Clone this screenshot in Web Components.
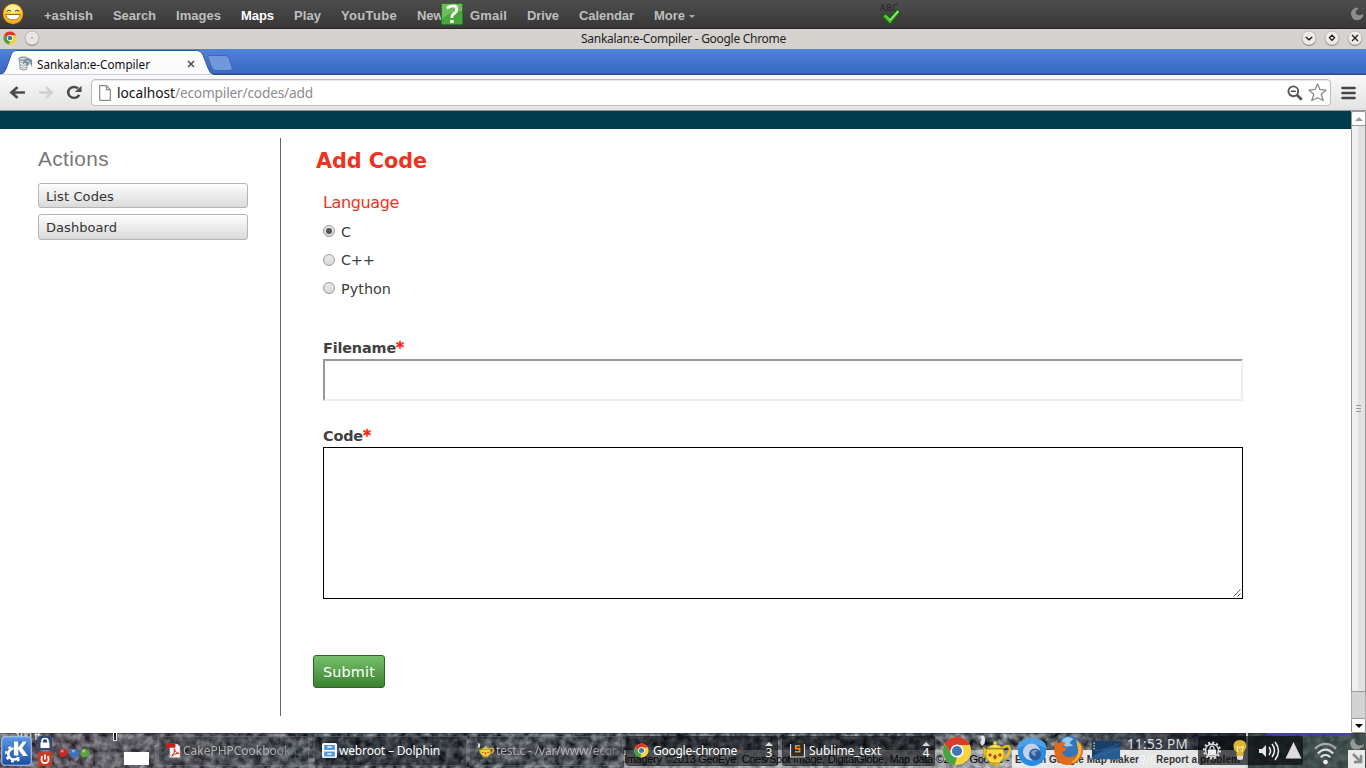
<!DOCTYPE html>
<html lang="en">
<head>
<meta charset="utf-8">
<title>Sankalan:e-Compiler</title>
<style>
html,body{margin:0;padding:0;width:1366px;height:768px;overflow:hidden;background:#fff}
body{font-family:"Liberation Sans",sans-serif}
</style>
</head>
<body>
<desk-screen></desk-screen>
<script>
const define=(name,html,setup)=>{
  const tpl=document.createElement('template');tpl.innerHTML=html;
  customElements.define(name,class extends HTMLElement{
    connectedCallback(){
      if(this.shadowRoot)return;
      this.attachShadow({mode:'open'}).append(tpl.content.cloneNode(true));
      if(setup)setup(this,this.shadowRoot);
    }
  });
};

/* Inline text whose letter spacing is tuned so the run has the width given in "w". */
define('fit-text',`<style>:host{display:inline-block;white-space:pre;flex:none}span{display:inline-block}</style><span><slot></slot></span>`,(el,root)=>{
  const w=+el.getAttribute('w');if(!w)return;
  const s=root.querySelector('span'),n=el.textContent.length;
  s.style.letterSpacing=((w-s.getBoundingClientRect().width)/n)+'px';
});

const chromeBall=`<circle cx="16" cy="16" r="15" fill="#f8d33c"/><path d="M3 8.500L10.200 19.500L16 22.500L13.500 30.800A15 15 0 0 1 3 8.500Z" fill="#45a343"/><path d="M3 8.500A15 15 0 0 1 29.500 9.500H16Q11 10 10 14L9 17Z" fill="#dd3a2e"/><circle cx="16" cy="16" r="7" fill="#fff"/><circle cx="16" cy="16" r="5.400" fill="#3f76b5"/>`;
const teapot=`<path d="M23 13q8-5 8 2q-1 7-9 9" fill="none" stroke="#e8bd22" stroke-width="2.500"/><path d="M10 16L4 12L5 20Q7 25 10 25Z" fill="#eac72b" stroke="#b08b10" stroke-width=".7"/><path d="M8 14h16q4 9-4 14h-8q-8-5-4-14Z" fill="#f5dc3f" stroke="#b9951a"/><path d="M8 13q8-7 16 0z" fill="#f9e765" stroke="#b9951a" stroke-width=".8"/><circle cx="16" cy="8" r="1.800" fill="#f5dc3f"/><path d="M9 20l2-2 2 2-2 2zM19 20l2-2 2 2-2 2zM14 22l2-3 2 3-2 3z" fill="#d8352a"/><path d="M11 28.500h10v2H11z" fill="#dbaf1c"/><path d="M3 11Q0 8 2 6T1 1Q6-1 6 4T5 9Z" fill="#f4f4f4" opacity=".9"/>`;
const icons={
smile:['0 0 22 22',`<circle cx="11" cy="11" r="10.200" fill="#fb9d08"/><circle cx="11" cy="10" r="9" fill="#fecb3a"/><ellipse cx="11" cy="6" rx="7" ry="4" fill="#fff0a0"/><path d="M5 8.500q2-2.500 4 0M13 8.500q2-2.500 4 0" stroke="#70450d" fill="none" stroke-width="1.200"/><path d="M3.700 11.500h14.600q-1 5.500-7.300 5.500t-7.300-5.500z" fill="#fff" stroke="#a06b18"/>`],
question:['0 0 22 22',`<rect x=".5" y=".5" width="21" height="21" rx="1" fill="#46a83a" stroke="#257d1a"/><path d="M1 1h20v7Q10 8 1 16Z" fill="#88cd76" opacity=".6"/><path d="M5.800 5Q15.500 0 15.800 6.500Q15.800 9 12.500 11Q10.800 12.200 10.800 15" stroke="#fff" stroke-width="2.800" fill="none"/><path d="M9.200 17h3.400v3H9.200z" fill="#fff"/>`],
check:['0 0 20 20',`<text x="0" y="9" font-family="Open Sans,sans-serif" font-size="8" textLength="17" fill="#222">ABC</text><path d="M2.500 13.500l3-2.500 4 4 7-8 2.500 2.500L9.500 21Z" fill="#4cc522" stroke="#17600d"/><path d="M4 13l5.500 3.500 7.500-8.500 1 1-8 8.500Z" fill="#a7dfa0"/>`],
cashew:['0 0 16 16',`<path d="M6 1Q-1 4 2 11Q5 17 12 14Q16 11 15 8Q10 11 7 8Q5 4 10 2Q8 0 6 1Z" fill="#8d8d8d"/><path d="M11 1h1M14 2h1" stroke="#777" fill="none"/>`],
chrome:['0 0 32 32',chromeBall],
pin:['0 0 16 16',`<circle cx="8" cy="9" r="7" fill="#918c88"/><circle cx="8" cy="8" r="7" fill="#e9e7e5" stroke="#a8a3a0" stroke-width=".7"/><circle cx="8" cy="8" r=".8" fill="#777"/>`],
min:['0 0 16 16',`<circle cx="8" cy="8.800" r="7.200" fill="#918c88"/><circle cx="8" cy="8" r="7" fill="#eeeceb" stroke="#aaa5a1" stroke-width=".6"/><path d="M4.800 7l3.200 2.800L11.200 7" fill="none" stroke="#222" stroke-width="1.500"/>`],
max:['0 0 16 16',`<circle cx="8" cy="8.800" r="7.200" fill="#918c88"/><circle cx="8" cy="8" r="7" fill="#eeeceb" stroke="#aaa5a1" stroke-width=".6"/><path d="M8 5.200l2.600 2.600L8 10.400 5.400 7.800Z" fill="none" stroke="#222" stroke-width="1.300"/>`],
cls:['0 0 16 16',`<circle cx="8" cy="8.800" r="7.200" fill="#918c88"/><circle cx="8" cy="8" r="7" fill="#eeeceb" stroke="#aaa5a1" stroke-width=".6"/><path d="M5 5l6 6M11 5l-6 6" fill="none" stroke="#222" stroke-width="1.400"/>`],
db:['0 0 16 16',`<path d="M1 3q4-3 9 0l-.5 11q-4 2-7 0Z" fill="#edf0f2" stroke="#8a949d"/><ellipse cx="5.700" cy="3" rx="5" ry="2" fill="#c5ced5" stroke="#77828d"/><path d="M1.500 6q4 3 8 0M2 9q4 3 7 0M2.500 12q3 2 7 0" stroke="#9ba5ad" fill="none"/><path d="M6 4l5-2 4 2v8l-2-4-4 3-1-4-3 2Z" fill="#7d8fa0"/><path d="M9 5l3 1v4" stroke="#d0dae2" fill="none"/>`],
x:['0 0 8 8',`<path d="M1 1l6 6M7 1L1 7" stroke="#505050" stroke-width="1.600"/>`],
back:['0 0 16 16',`<path d="M15 8H3M8 2.300L2.300 8 8 13.700" fill="none" stroke="#4b4b4b" stroke-width="2.700"/>`],
fwd:['0 0 16 16',`<path d="M1 8h12M8 2.300L13.700 8 8 13.700" fill="none" stroke="#d0d0d0" stroke-width="2.700"/>`],
reload:['0 0 16 16',`<path d="M13.200 10.500A5.800 5.800 0 1 1 12 3.700" fill="none" stroke="#4b4b4b" stroke-width="2.600"/><path d="M15.500.800v6.700H8.800Z" fill="#4b4b4b"/>`],
page:['0 0 12 16',`<path d="M.7.700h6.800l3.800 4v10.600H.7Z" fill="#fff" stroke="#8b8b8b" stroke-width="1.200"/><path d="M7.500.700v4h3.800" fill="none" stroke="#8b8b8b" stroke-width="1.200"/>`],
zoomout:['0 0 16 16',`<circle cx="6.300" cy="6.300" r="4.900" fill="#fff" stroke="#555" stroke-width="1.900"/><path d="M3.800 6.300h5" stroke="#444" stroke-width="1.400"/><path d="M10 10l4.700 4.800" stroke="#555" stroke-width="2.700"/>`],
star:['0 0 18 18',`<path d="M9 1l2.200 5 5.800.8-4.500 3.800 1.900 6L9 14l-5.400 2.600 1.900-6L1 6.800 6.800 6Z" fill="#fff" stroke="#858585" stroke-width="1.200" stroke-linejoin="round"/>`],
menu:['0 0 14 14',`<path d="M1.500 2h11M1.500 7h11M1.500 12h11" stroke="#454545" stroke-width="2.700" stroke-linecap="round"/>`],
kde:['0 0 30 30',`<defs><linearGradient id="k" x2="0" y2="1"><stop stop-color="#5e98e4"/><stop offset="1" stop-color="#1a4c9e"/></linearGradient></defs><rect x=".7" y=".7" width="28.600" height="28.600" rx="3.500" fill="url(#k)" stroke="#abc9ef"/><circle cx="12.500" cy="18" r="5.500" fill="none" stroke="#fff" stroke-width="2.500"/><circle cx="12.500" cy="18" r="7.500" fill="none" stroke="#fff" stroke-width="2.200" stroke-dasharray="2.700 3.190"/><path d="M12 5h13v13l-4 3h-6l-3-3z" fill="#3973c4"/><path d="M12.500 5.500h4.200v6L21 5.500H25L20.500 12 26 20H21.500L16.700 13.500v6H12.500Z" fill="#fff"/>`],
lock:['0 0 14 30',`<rect width="14" height="14" y="0" rx="1.500" fill="#314b73"/><path d="M4 7V5q0-2.500 3-2.500T10 5v2" fill="none" stroke="#fff" stroke-width="1.700"/><rect x="2.500" y="6.500" width="9" height="5.500" fill="#fff"/><rect y="16" width="14" height="14" rx="1.500" fill="#c93b27"/><path d="M4 20q-2 7 3 7t3-7" fill="none" stroke="#fff" stroke-width="1.800"/><path d="M7 18.500v5" stroke="#fff" stroke-width="1.700"/>`],
dots:['0 0 32 12',`<circle cx="5" cy="6" r="4.300" fill="#c92626"/><circle cx="16" cy="6" r="4.300" fill="#3974be"/><circle cx="26" cy="6" r="4.300" fill="#58a63c"/><g fill="#fff" opacity=".45"><circle cx="4" cy="4" r="1.600"/><circle cx="15" cy="4" r="1.600"/><circle cx="25" cy="4" r="1.600"/></g>`],
pdf:['0 0 16 16',`<path d="M4 1h8l3 3v11.500H4z" fill="#f3f3f3" stroke="#aaa" stroke-width=".6"/><path d="M0 1h10v4H0z" fill="#cf1d16"/><path d="M6 14q4-4 3-8q1 5 5 5q-5 0-8 3" fill="none" stroke="#cf2018"/>`],
cabinet:['0 0 14 15',`<rect x=".5" y=".5" width="13" height="14" rx="1" fill="#fff" stroke="#e9f2ff"/><rect x="2" y="2" width="10" height="5" fill="#4f98df"/><rect x="2" y="8.500" width="10" height="5" fill="#4f98df"/><path d="M5 4h4M5 11h4" stroke="#fff" stroke-width="1.500"/>`],
pot:['0 0 32 32',teapot],
sublime:['0 0 14 14',`<path d="M.5 1v12h13V1" fill="#353029" stroke="#ddd"/><path d="M2.500 0h9v10h-9z" fill="#2c2825"/><path d="M9.500 2.500H5.300v2.700h3.700v3H4.500" fill="none" stroke="#ef8a23" stroke-width="1.500"/>`],
blue:['0 0 32 32',`<circle cx="16" cy="17" r="14" fill="#2b8cdf"/><path d="M1 14L3 8Q16-3 29 8l2 6-6-3Q16 6 7 11Z" fill="#4aa2ec"/><circle cx="15.500" cy="17" r="8.500" fill="#c3d3e4"/><circle cx="19" cy="19.500" r="6" fill="#2e5b9e"/><path d="M15 17q4-4 7-1l-3 1 1 4q-4 0-5-4" fill="#799ece"/>`],
firefox:['0 0 32 32',`<circle cx="17" cy="14" r="13" fill="#3275bb"/><path d="M10 4q6-4 11 0l-4 4 4 3-7 1-5-2Z" fill="#99c8e5"/><path d="M3 5l3 4q3-3 7-1l-3 4 4 2q0 3-5 3 2 6 8 6 8 0 10-7l1-9q5 7 2 14-5 10-15 10T2 21Q0 13 3 5Z" fill="#e06b1c"/><path d="M24 5q7 5 5 14-3 9-11 10 8-5 8-13Z" fill="#f3b63c"/>`],
desk:['0 0 30 24',`<rect y="1" width="29" height="20" fill="#285b92"/><path d="M0 1h29v7Q14 8 0 18Z" fill="#1a3f68"/><path d="M3 12q15-2 25-8M3 17q15-2 25-8" stroke="#3777ae" fill="none" stroke-width=".6"/><path d="M1.500 3.500h1.500M1.500 6.500h1.500M1.500 9.500h1.500" stroke="#efdd72" stroke-width="1.300"/>`],
tray:['0 0 105 29',`<rect width="105" height="29" rx="3" fill="#080b0d" opacity=".68"/><g transform="translate(14 14.500)"><circle r="6.500" fill="none" stroke="#e5e5e5" stroke-width="1.300"/><circle r="8" fill="none" stroke="#e5e5e5" stroke-width="2" stroke-dasharray="2 2.190"/><rect x="-4" y="-1" width="8" height="6" fill="#eee"/><path d="M-2-1v-2q2-3 4 0v2" fill="none" stroke="#eee" stroke-width="1.300"/></g><path d="M42 4q-7 0-6.500 7 0 3 3 5v4h7v-4q3-3 3-6-.5-6-6.500-6Z" fill="#dfb631"/><path d="M40 16l-1-6 3 2 3-2-1 6" stroke="#fff2a7" fill="none"/><path d="M39 20h6v3q-3 2-6 0Z" fill="#ddd"/><path d="M61 13h3l4-4v12l-4-4h-3Z" fill="#e5e5e5"/><path d="M71 11q3 4 0 8M74 8q5 6 0 13M77 6q7 9 0 18" fill="none" stroke="#eee" stroke-width="1.500"/><path d="M87.500 22.500L95.500 6l8 16.500Z" fill="#ddd"/>`],
wifi:['0 0 26 26',`<path d="M2 9Q13-1 24 9" fill="none" stroke="#aaa" stroke-width="2.300"/><path d="M5 14q8-8 16 0M8 18q5-5 10 0" fill="none" stroke="#ddd" stroke-width="2.300"/><circle cx="13" cy="23" r="2.500" fill="#eee"/>`],
corner:['0 0 17 30',`<path d="M7 0q-7 3-4 9 4 5 12 0l1-3q-5 3-8 0T7 0Z" fill="#999"/><rect y="12" width="17" height="18" fill="#e9e9e9"/><path d="M5 16l7 7M13 17v7H6" fill="none" stroke="#888" stroke-width="2.500"/>`]
};
define('u-icon',`<style>:host{display:block;flex:none}svg{display:block;width:100%;height:100%;overflow:visible}</style>`,(el,root)=>{
  const [vb,body]=icons[el.getAttribute('name')];
  el.style.width=el.getAttribute('w')+'px';el.style.height=(el.getAttribute('h')||el.getAttribute('w'))+'px';
  root.innerHTML+=`<svg viewBox="${vb}" preserveAspectRatio="none">${body}</svg>`;
});

define('google-bar',`<style>
:host{display:flex;box-sizing:border-box;height:29px;background:linear-gradient(#4d4d4d,#383838);border-bottom:1px solid #252122;position:relative;padding-left:2px}
nav{display:flex;gap:20px;margin-left:20px;font:bold 13px/31px "Liberation Sans",sans-serif;color:#bfbfbf}
.on{color:#fff}.tri{display:inline-block;border:3px solid transparent;border-top-color:#aaa;border-bottom:0;vertical-align:2px;margin-left:4px}
u-icon{margin-top:3px}.q{position:absolute;left:441px;top:0}.c{position:absolute;left:880px;top:-1px}.k{position:absolute;left:1350px;top:4px}
</style><u-icon name="smile" w="22"></u-icon><nav><fit-text w="49">+ashish</fit-text><fit-text w="43">Search</fit-text><fit-text w="45">Images</fit-text><fit-text class="on" w="33">Maps</fit-text><fit-text w="27">Play</fit-text><fit-text w="56">YouTube</fit-text><fit-text w="33">News</fit-text><fit-text w="37">Gmail</fit-text><fit-text w="32">Drive</fit-text><fit-text w="55">Calendar</fit-text><span><fit-text w="31">More</fit-text><i class="tri"></i></span></nav><u-icon class="q" name="question" w="22"></u-icon><u-icon class="c" name="check" w="21"></u-icon><u-icon class="k" name="cashew" w="14"></u-icon>`);

define('window-title',`<style>
:host{display:flex;height:20px;background:#d6d2cf;align-items:center;justify-content:space-between;padding:0 3px;font:12px/22px "Noto Sans",sans-serif;color:#222}
div{display:flex;gap:7px}.l{align-items:center}.l,.r{position:relative;top:-1px}
</style><div class="l"><u-icon name="chrome" w="14"></u-icon><u-icon name="pin" w="16"></u-icon></div><fit-text w="205" style="margin-left:-6px;transform:translateX(16px)">Sankalan:e-Compiler - Google Chrome</fit-text><div class="r"><u-icon name="min" w="16"></u-icon><u-icon name="max" w="16"></u-icon><u-icon name="cls" w="16"></u-icon></div>`);

define('tab-strip',`<style>
:host{display:flex;height:26px;background:linear-gradient(#5183d8,#3e6dc8 70%,#3d6cc4 91%,#2c4f93 96%);position:relative}
.shape{position:absolute;left:0;top:0;display:block}
.tab{position:relative;display:flex;align-items:center;padding:3px 0 0 18px;width:200px;box-sizing:border-box;height:26px;font:11.700px/20px "Noto Sans",sans-serif;color:#111}
fit-text{margin-left:4px}.x{margin-left:auto;margin-right:5px}
</style><svg class="shape" width="250" height="26"><defs><linearGradient id="t" x2="0" y2="1"><stop stop-color="#fff"/><stop offset="1" stop-color="#f9f9f9"/></linearGradient></defs><path d="M0 25.500Q4 25 6 20L11 6Q12 1.500 17 1.500H196Q201 1.500 203 6L208 19Q210 25 214 26H0Z" fill="url(#t)" stroke="#2f5599"/><path d="M0 25.500H213V27H0Z" fill="#f9f9f9"/><path d="M209 6.500H225Q228 6.500 229 9L232 18Q233 21.500 229 21.500H216Q213 21.500 211.500 18L208 9Q207 6.500 209 6.500Z" fill="#7198dc" stroke="#4066ad"/></svg><div class="tab"><u-icon name="db" w="15"></u-icon><fit-text w="113">Sankalan:e-Compiler</fit-text><u-icon class="x" name="x" w="8" h="8"></u-icon></div>`);

define('tool-bar',`<style>
:host{display:flex;box-sizing:border-box;height:36px;background:linear-gradient(#f9f9f9,#e3e3e3);border-bottom:1px solid #979797;align-items:center;padding:0 10px 0 9px}
.omni{display:flex;flex:1;align-items:center;box-sizing:border-box;height:27px;border:1px solid #bdbdbd;border-radius:4px;background:#fff;box-shadow:inset 0 1px 1px #e8e8e8;padding:0 3px 0 7px;margin:0 10px 0 9px;font:13.700px/24px "Noto Sans",sans-serif;color:#111}
fit-text+fit-text{color:#8c8c8c}fit-text:first-of-type{margin-left:6px}.z{margin-left:auto;margin-right:5px}
</style><u-icon name="back" w="17" h="15"></u-icon><u-icon name="fwd" w="16" h="15" style="margin-left:12px"></u-icon><u-icon name="reload" w="16" h="15" style="margin-left:12px"></u-icon><div class="omni"><u-icon name="page" w="12" h="16"></u-icon><fit-text w="58">localhost</fit-text><fit-text w="138">/ecompiler/codes/add</fit-text><u-icon class="z" name="zoomout" w="16"></u-icon><u-icon name="star" w="19"></u-icon></div><u-icon name="menu" w="15" h="14"></u-icon>`);

define('scroll-bar',`<style>
:host{display:flex;flex-direction:column;width:15px;height:622px;box-sizing:border-box;background:#d3d3d3;flex:none}
.b{height:15px;box-sizing:border-box;border:1px solid #999;background:#fff;display:flex;align-items:center;justify-content:center;border-radius:2px}
.b i{border:4px solid transparent}.up i{border-bottom-color:#999;border-top:0}.dn i{border-top-color:#000;border-bottom:0}
.thumb{height:565px;margin-top:-1px;border:1px solid #999;box-sizing:content-box;background:linear-gradient(90deg,#f0f0f0 50%,#e2e2e2 50%);display:flex;flex-direction:column;gap:2px;align-items:center;justify-content:center}
.thumb b{width:5px;height:1px;background:#999}.sp{flex:1;border:solid #aaa;border-width:0 1px}
</style><div class="b up"><i></i></div><div class="thumb"><b></b><b></b><b></b></div><div class="sp"></div><div class="b dn"><i></i></div>`);

define('action-link',`<style>:host{display:block;box-sizing:border-box;width:210px;height:26px;margin-bottom:5px;border:1px solid #b5b5b5;border-radius:3px;background:linear-gradient(#fefefe,#dadada);padding-left:7px;font:13px/25px "DejaVu Sans",sans-serif;color:#333}:host([short]){height:25px;margin-bottom:6px}</style><slot></slot>`);

define('radio-option',`<style>:host{display:flex;align-items:center;height:28px;font:14.400px/28px "DejaVu Sans",sans-serif;color:#404040}
i{box-sizing:border-box;width:12px;height:12px;border-radius:50%;border:1px solid #999;background:linear-gradient(#e9e9e9,#d9d9d9);margin-right:6px;display:flex;align-items:center;justify-content:center;position:relative;top:-1px}
:host([low]) i{top:0}
:host([checked]) i:after{content:"";width:6px;height:6px;border-radius:50%;background:#555}</style><i></i><slot></slot>`);

define('form-field',`<style>:host{display:block;font:bold 14.400px/18px "DejaVu Sans",sans-serif;color:#404040}em{font-style:normal;color:#ff2211;font-size:15.500px;-webkit-text-stroke:.4px #ff2211}
.l{height:20px;display:flex}.box{box-sizing:border-box;width:920px;height:42px;border:2px solid;border-color:#999 #eee #eee #999;background:#fff}
:host([multi]) .box{height:152px;border:1px solid #000;display:flex;align-items:flex-end;justify-content:flex-end}svg{display:none;margin:0 1px 1px 0}:host([multi]) svg{display:block}</style>
<div class="l"><slot></slot><em>*</em></div><div class="box"><svg width="8" height="8"><path d="M.5 7.500l7-7M4.500 7.500l3-3" stroke="#555" fill="none"/></svg></div>`);

define('code-page',`<style>
:host{display:flex;height:622px;background:#fff}
main{flex:1;display:flex;flex-direction:column}header{height:18px;background:#003d4c}
.cols{display:flex;padding:9px 0 0 38px}
aside{width:242px}aside h3{margin:0;font:normal 20.800px/42px "Liberation Sans",sans-serif;color:#777;height:45px}
section{border-left:1px solid #666;height:578px;box-sizing:border-box;padding-left:32px;flex:1;font-family:"DejaVu Sans",sans-serif}
h2{margin:0 0 0 3px;font:bold 20.800px/47px "DejaVu Sans",sans-serif;color:#ee3322;height:51px}
.f{padding-left:10px}.lg{font-size:16px;line-height:28px;height:29px;color:#ee3322}
button{display:block;box-sizing:border-box;width:72px;height:33px;margin-top:56px;border:1px solid #2d6324;border-radius:3px;background:linear-gradient(#76bf6b,#3b8230);padding:2px 0 0;text-align:center;color:#fff;font:14.400px/29px "DejaVu Sans",sans-serif}
</style><main><header></header><div class="cols"><aside><h3><fit-text w="71">Actions</fit-text></h3><action-link short><fit-text w="68">List Codes</fit-text></action-link><action-link><fit-text w="71">Dashboard</fit-text></action-link></aside>
<section><h2><fit-text w="111">Add Code</fit-text></h2><div class="f"><div class="lg"><fit-text w="76">Language</fit-text></div><radio-option checked>C</radio-option><radio-option low><fit-text w="33.500">C++</fit-text></radio-option><radio-option style="margin-top:1px"><fit-text w="50">Python</fit-text></radio-option>
<form-field style="margin-top:36px"><fit-text w="73">Filename</fit-text></form-field><form-field multi style="margin-top:26px"><fit-text w="40">Code</fit-text></form-field></div><button><fit-text w="52">Submit</fit-text></button></section></div></main><scroll-bar></scroll-bar>`);

customElements.define('task-item',class extends HTMLElement{connectedCallback(){
  if(this.shadowRoot)return;
  const a=n=>this.getAttribute(n);
  this.attachShadow({mode:'open'}).innerHTML=`<style>:host{display:flex;box-sizing:border-box;height:30px;align-items:center;border:1px solid #9995;border-radius:3px;background:#10141877;padding:0 7px;color:#fff;font:12px/30px "Noto Sans",sans-serif;flex:none}
:host([dim]){background:#3034384d;color:#b0b0b0}:host([dim]) slot{display:block;-webkit-mask:linear-gradient(90deg,#000 75%,#0002)}:host([strong]){background:#080a0c90;border-color:#2226}
.n{margin-left:auto;font-size:12px;line-height:13px;text-align:center;margin-right:-3px}.n:before{content:"";display:block;border:4px solid transparent;border-top:0;border-bottom-color:#ddd}
u-icon{margin-right:2px}:host([strong]) u-icon{margin-right:4px}</style><u-icon name="${a('icon')}" w="${a('icon')==='pot'?17:15}" h="15"></u-icon><slot></slot>${a('count')?`<span class="n">${a('count')}</span>`:''}`;
}});

define('desk-panel',`<style>
:host{display:block;position:relative;height:35px;overflow:hidden;background:#3d434a}
.rock{position:absolute;left:0;top:0}
.items{position:relative;display:flex;height:35px;align-items:center;padding-left:1px}
.items>*{flex:none}
.pager{display:grid;grid-template-columns:26px 25px;grid-template-rows:13px 13px;gap:3px;margin-left:4px;width:55px}.pager i{background:#888c9940}.pager i:last-child{background:#fff}
.attr{position:absolute;left:624px;right:120px;bottom:0;height:18px;display:flex;font:11px/19px "Liberation Sans",sans-serif;color:#000;background:linear-gradient(90deg,#fff6 388px,#f0f0f0f0 388px)}
.attr b{font-size:10px;color:#333}
.clock{font:13.500px/18px "Noto Sans",sans-serif;color:#ddd;align-self:flex-start;margin:2px 0 0 6px;height:18px}
.scale{position:absolute;left:15px;top:0;font:10px/8px "Liberation Sans",sans-serif;color:#fff}
.date{position:absolute;left:1139px;top:20px;font:12px/14px "Noto Sans",sans-serif;color:#fff9}
.mark{position:absolute;left:113px;top:0;width:2px;height:7px;background:#111;border:1px solid #fff;border-top:0}
</style><svg class="rock" width="1366" height="35"><defs><filter id="n" x="0" y="0" width="1" height="1" color-interpolation-filters="sRGB"><feTurbulence type="fractalNoise" baseFrequency=".13 .14" numOctaves="3" seed="5"/><feColorMatrix values="1.050 0 0 0 -.17  1.050 0 0 0 -.155  1.050 0 0 0 -.13  0 0 0 0 1"/></filter><linearGradient id="tint"><stop stop-color="#6a5058" stop-opacity=".35"/><stop offset=".14" stop-color="#5e5058" stop-opacity=".3"/><stop offset=".23" stop-color="#404c5c" stop-opacity=".1"/><stop offset=".77" stop-color="#404c5c" stop-opacity=".1"/><stop offset=".85" stop-color="#20242e" stop-opacity=".6"/><stop offset=".912" stop-color="#161a28" stop-opacity=".8"/><stop offset=".915" stop-color="#334340" stop-opacity=".75"/><stop offset="1" stop-color="#3d4f4a" stop-opacity=".8"/></linearGradient></defs><rect width="1366" height="35" filter="url(#n)"/><rect width="1366" height="35" fill="url(#tint)"/><path d="M0 .5h1366" stroke="#222" stroke-opacity=".4"/><path d="M1247 0v35" stroke="#ccc" stroke-width="2"/><path d="M1266 1h87" stroke="#4442a0" stroke-width="2"/></svg>
<span class="scale">100 ft</span><i class="mark"></i>
<div class="attr"><fit-text w="388">Imagery ©2013 GeoEye, Cnes/Spot Image, DigitalGlobe, Map data ©2013 Google - </fit-text><b style="margin-left:3px"><fit-text w="124">Edit in Google Map Maker</fit-text></b><b style="margin-left:17px"><fit-text w="84">Report a problem</fit-text></b></div><span class="date">9/0</span>
<div class="items"><u-icon name="kde" w="31" h="30"></u-icon><u-icon name="lock" w="14" h="30" style="margin-left:6px"></u-icon><u-icon name="dots" w="33" h="12" style="margin-left:6px;position:relative;top:2px"></u-icon><div class="pager"><i></i><i></i><i></i><i></i></div>
<task-item icon="pdf" dim style="width:151px;margin-left:8px"><fit-text w="118">CakePHPCookbook.p</fit-text></task-item>
<task-item icon="cabinet" style="width:153px;margin-left:5px"><fit-text w="101">webroot – Dolphin</fit-text></task-item>
<task-item icon="pot" dim style="width:154px;margin-left:2px"><fit-text w="127">test.c - /var/www/ecom</fit-text></task-item>
<task-item icon="chrome" strong count="3" style="width:152px;margin-left:3px"><fit-text w="84">Google-chrome</fit-text></task-item>
<task-item icon="sublime" strong count="4" style="width:153px;margin-left:4px"><fit-text w="72">Sublime_text</fit-text></task-item>
<u-icon name="chrome" w="30" style="margin-left:7px"></u-icon><u-icon name="pot" w="32" style="margin-left:7px"></u-icon><u-icon name="blue" w="32" style="margin-left:5px"></u-icon><u-icon name="firefox" w="31" style="margin-left:5px"></u-icon><u-icon name="desk" w="29" h="22" style="margin-left:8px"></u-icon>
<div class="clock"><fit-text w="61">11:53 PM</fit-text></div><u-icon name="tray" w="105" h="29" style="margin-left:10px"></u-icon><u-icon name="wifi" w="25" h="25" style="margin-left:10px;position:relative;top:2px"></u-icon><u-icon name="corner" w="17" h="30" style="margin-left:10px;position:relative;top:2px"></u-icon></div>`);

define('desk-screen',`<style>:host{display:flex;flex-direction:column;width:1366px;height:768px}google-bar,window-title,tab-strip,tool-bar,code-page,desk-panel{flex:none}</style><google-bar></google-bar><window-title></window-title><tab-strip></tab-strip><tool-bar></tool-bar><code-page></code-page><desk-panel></desk-panel>`);
</script>
</body>
</html>
